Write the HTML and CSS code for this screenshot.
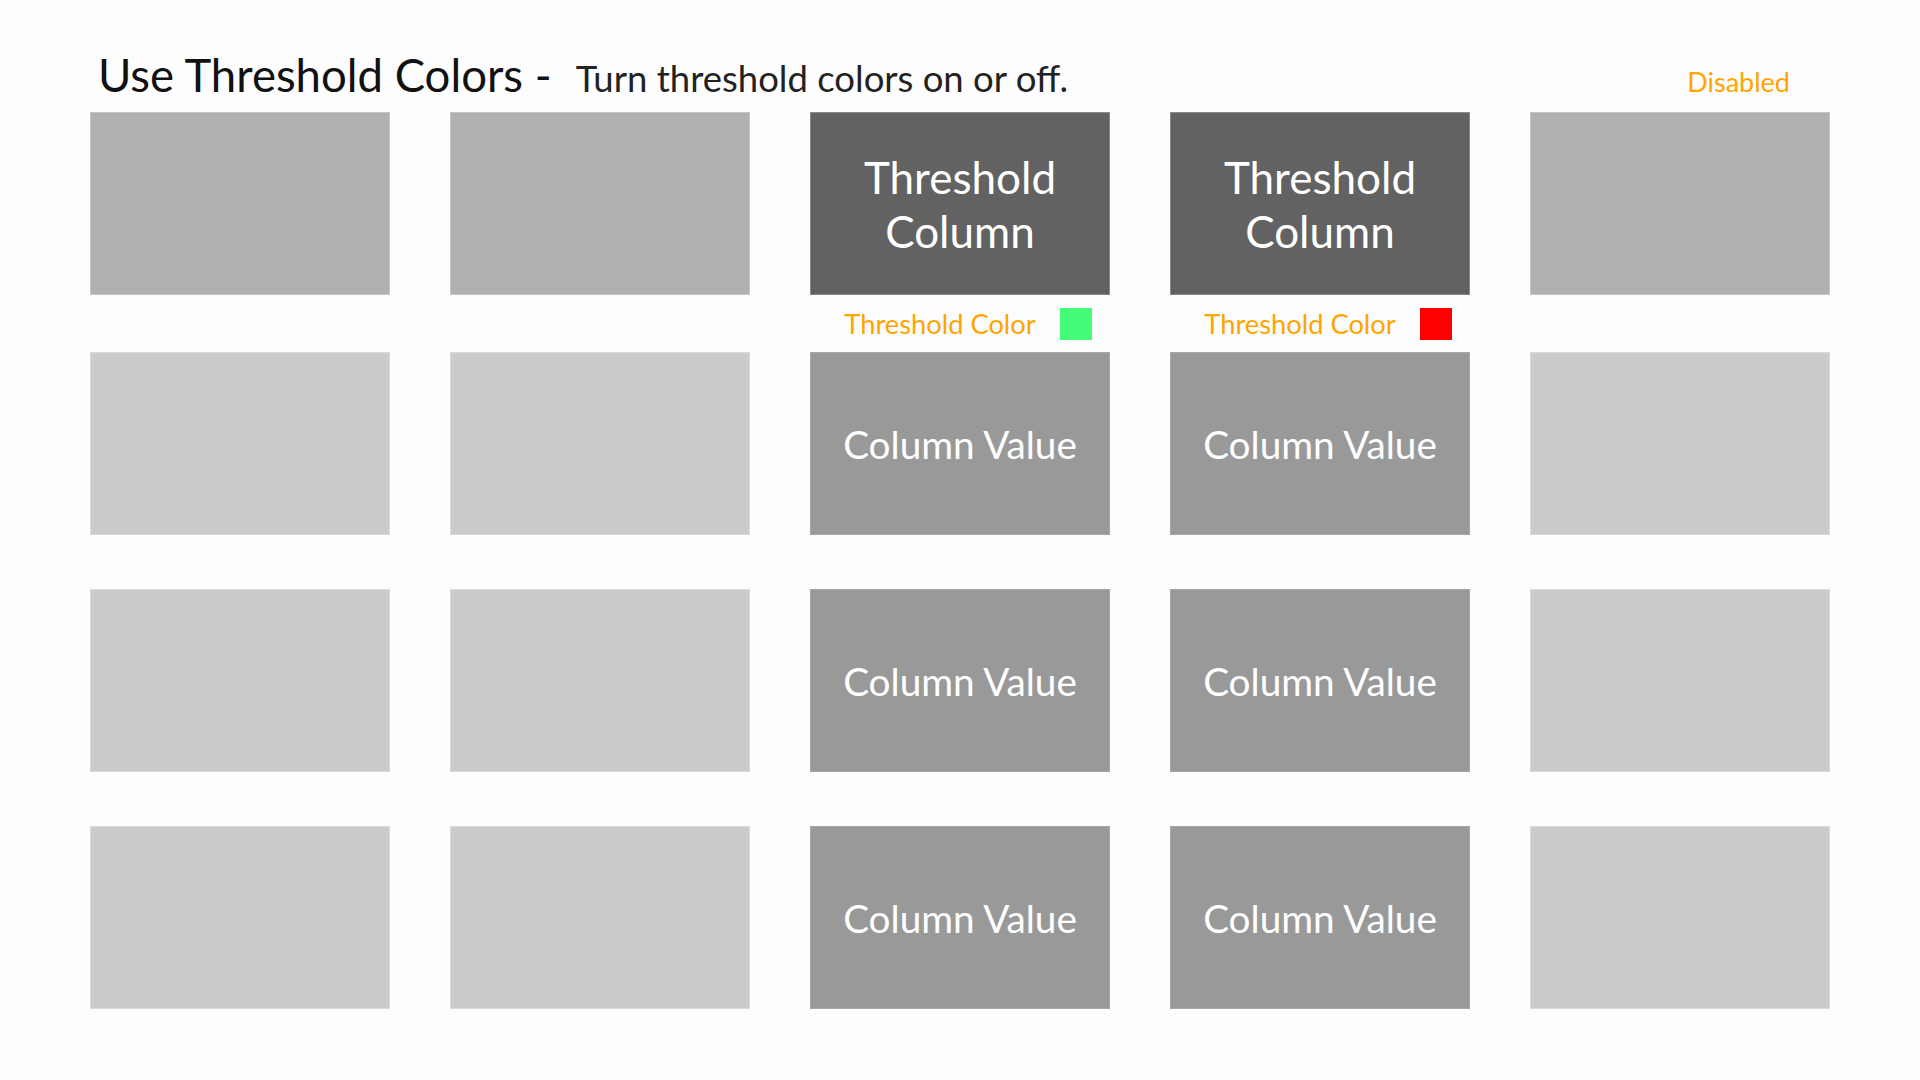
FILE: index.html
```html
<!DOCTYPE html>
<html lang="en">
<head>
<meta charset="utf-8">
<title>Use Threshold Colors</title>
<link rel="stylesheet" href="styles.css">
</head>
<body>
<div class="page">
  <header class="header">
    <h1 class="title">Use Threshold Colors -</h1>
    <p class="subtitle">Turn threshold colors on or off.</p>
    <span class="status">Disabled</span>
  </header>

  <div class="board">
    <div class="row">
      <div class="tile tile-top"></div>
      <div class="tile tile-top"></div>
      <div class="tile tile-head">Threshold<br>Column</div>
      <div class="tile tile-head">Threshold<br>Column</div>
      <div class="tile tile-top"></div>
    </div>

    <div class="row row-labels">
      <div></div>
      <div></div>
      <div class="legend"><span class="legend-text">Threshold Color</span><span class="swatch swatch-green"></span></div>
      <div class="legend"><span class="legend-text">Threshold Color</span><span class="swatch swatch-red"></span></div>
      <div></div>
    </div>

    <div class="row">
      <div class="tile tile-light"></div>
      <div class="tile tile-light"></div>
      <div class="tile tile-value">Column Value</div>
      <div class="tile tile-value">Column Value</div>
      <div class="tile tile-light"></div>
    </div>

    <div class="row row-spaced">
      <div class="tile tile-light"></div>
      <div class="tile tile-light"></div>
      <div class="tile tile-value">Column Value</div>
      <div class="tile tile-value">Column Value</div>
      <div class="tile tile-light"></div>
    </div>

    <div class="row row-spaced">
      <div class="tile tile-light"></div>
      <div class="tile tile-light"></div>
      <div class="tile tile-value">Column Value</div>
      <div class="tile tile-value">Column Value</div>
      <div class="tile tile-light"></div>
    </div>
  </div>
</div>
</body>
</html>
```

FILE: styles.css
```css
html, body {
  margin: 0;
  padding: 0;
}

body {
  background: #fdfdfd;
  font-family: Lato, "Open Sans", sans-serif;
  width: 1920px;
  height: 1080px;
  overflow: hidden;
}

.page {
  padding-left: 90px;
}

.header {
  display: flex;
  align-items: baseline;
  height: 112px;
  box-sizing: border-box;
  padding-top: 52px;
  padding-left: 8px;
  padding-right: 130px;
}

.title {
  margin: 0;
  font-size: 45.5px;
  font-weight: 400;
  line-height: 1;
  color: #111111;
}

.subtitle {
  margin: 0 0 0 24px;
  font-size: 36.5px;
  line-height: 1;
  color: #222222;
}

.status {
  margin-left: auto;
  font-size: 27px;
  line-height: 1;
  color: #ffa500;
}

.board {
  display: flex;
  flex-direction: column;
}

.row {
  display: grid;
  grid-template-columns: repeat(5, 300px);
  column-gap: 60px;
}

.row-spaced {
  margin-top: 54px;
}

.row-labels {
  height: 57px;
  align-items: center;
}

.tile {
  height: 183px;
  box-sizing: border-box;
  display: flex;
  align-items: center;
  justify-content: center;
  text-align: center;
  color: #ffffff;
}

.tile-top {
  background: #b0b0b0;
  border: 1px solid #c4c4c4;
}

.tile-light {
  background: #cbcbcb;
  border: 1px solid #d9d9d9;
}

.tile-head {
  background: #626262;
  border: 1px solid #8a8a8a;
  font-size: 44px;
  line-height: 54px;
}

.tile-value {
  background: #999999;
  border: 1px solid #a8a8a8;
  font-size: 38.7px;
}

.legend {
  display: flex;
  align-items: center;
  justify-content: center;
  gap: 24px;
  padding-left: 16px;
}

.legend-text {
  font-size: 27.3px;
  color: #ffa500;
}

.swatch {
  width: 32px;
  height: 32px;
}

.swatch-green {
  background: #45fc7a;
}

.swatch-red {
  background: #ff0000;
}
```
